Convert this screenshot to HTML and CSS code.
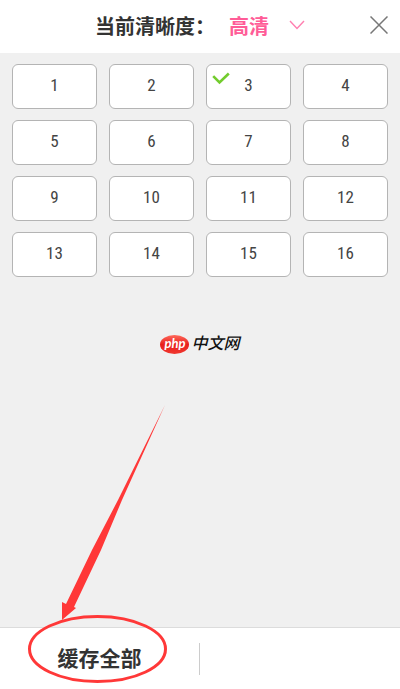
FILE: index.html
```html
<!DOCTYPE html>
<html lang="zh-CN">
<head>
  <meta charset="UTF-8">
  <meta name="viewport" content="width=device-width, initial-scale=1">
  <title>缓存</title>
  <link rel="stylesheet" href="styles.css">
</head>
<body>

  <!-- Quality bar -->
  <header class="topbar">
    <span class="label">当前清晰度：</span>
    <button class="quality" type="button">
      高清
      <svg width="16" height="10" viewBox="0 0 16 10"><path d="M1 1 L8 8.5 L15 1"/></svg>
    </button>
    <button class="close" type="button" aria-label="关闭">
      <svg width="18" height="18" viewBox="0 0 18 18"><path d="M0.5 0.5 L17.5 17.5 M17.5 0.5 L0.5 17.5"/></svg>
    </button>
  </header>

  <!-- Episodes -->
  <main>
    <div class="episodes">
      <button type="button">1</button>
      <button type="button">2</button>
      <button type="button">3
        <svg class="check" width="18" height="14" viewBox="0 0 18 14"><path d="M1.2 4.2 L7.5 10.5 L16.8 1.5"/></svg>
      </button>
      <button type="button">4</button>
      <button type="button">5</button>
      <button type="button">6</button>
      <button type="button">7</button>
      <button type="button">8</button>
      <button type="button">9</button>
      <button type="button">10</button>
      <button type="button">11</button>
      <button type="button">12</button>
      <button type="button">13</button>
      <button type="button">14</button>
      <button type="button">15</button>
      <button type="button">16</button>
    </div>

    <div class="brand">
      <span class="brand-badge">php</span>
      <span class="brand-name">中文网</span>
    </div>
  </main>

  <!-- Bottom actions -->
  <footer class="actions">
    <button class="cache-all" type="button">缓存全部</button>
    <span class="divider"></span>
    <svg class="pointer" width="180" height="290" viewBox="0 0 180 290">
      <path d="M165 6 L122 101 L101 151 L74 208 L76 209 L62 221 L62 203 L66 205 L92 151 L118 101 Z" fill="#ff3838"/>
      <ellipse cx="97.5" cy="250" rx="68" ry="32.5" fill="none" stroke="#ff3838" stroke-width="3"/>
    </svg>
  </footer>

</body>
</html>
```
FILE: styles.css
```css
* {
  box-sizing: border-box;
}

body {
  display: flex;
  flex-direction: column;
  min-height: 100vh;
  margin: 0;
  background-color: #f0f0f0;
  color: #333;
  font-family: "Liberation Sans", "Noto Sans CJK SC", sans-serif;
}

button {
  padding: 0;
  border: none;
  background: none;
  color: inherit;
  font: inherit;
  cursor: pointer;
}

svg {
  fill: none;
}

.topbar {
  display: flex;
  align-items: center;
  height: 53px;
  padding: 0 12px 3px 95px;
  background-color: #fff;
  font-size: 20px;
  font-weight: bold;
}

.label {
  width: 134px;
  white-space: nowrap;
}

.quality {
  display: flex;
  align-items: center;
  gap: 20px;
  color: #ff5c97;
}

.quality svg {
  stroke: #ff7fb0;
  stroke-width: 1.4;
}

.close {
  display: flex;
  margin-left: auto;
}

.close svg {
  stroke: #777;
  stroke-width: 1.5;
}

main {
  flex: 1;
}

.episodes {
  display: grid;
  grid-template-columns: repeat(4, 1fr);
  gap: 11px 12px;
  padding: 11px 12px;
}

.episodes button {
  position: relative;
  height: 45px;
  padding-bottom: 3px;
  border: 1px solid #b4b4b4;
  border-radius: 6px;
  background-color: #fff;
  color: #444;
  font-family: "Roboto Condensed", Roboto, sans-serif;
  font-size: 17px;
}

.check {
  position: absolute;
  top: 7px;
  left: 5px;
  stroke: #73cc2e;
  stroke-width: 2.6;
}

.brand {
  display: flex;
  justify-content: center;
  align-items: center;
  gap: 2px;
  height: 20px;
  margin-top: 46px;
}

.brand-badge {
  width: 29px;
  height: 19px;
  border-radius: 50%;
  background: linear-gradient(#ff6a5c, #e8201c 50%, #f03830);
  color: #fff;
  font-family: Lato, sans-serif;
  font-size: 13px;
  font-style: italic;
  font-weight: bold;
  line-height: 16px;
  text-align: center;
}

.brand-name {
  color: #111;
  font-size: 16px;
  font-style: italic;
  font-weight: 500;
  line-height: 20px;
}

.actions {
  position: relative;
  display: flex;
  align-items: center;
  height: 62px;
  border-top: 1px solid #dcdcdc;
  background-color: #fff;
}

.cache-all {
  flex: 1;
  padding-bottom: 4px;
  font-size: 21px;
  font-weight: bold;
}

.divider {
  width: 1px;
  height: 32px;
  margin-right: 50%;
  background-color: #ccc;
}

.pointer {
  position: absolute;
  bottom: 0;
  left: 0;
  pointer-events: none;
}
```
